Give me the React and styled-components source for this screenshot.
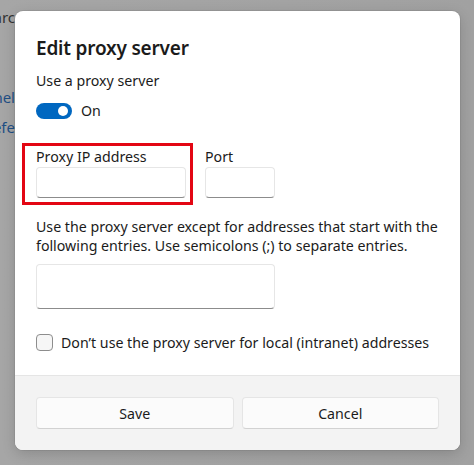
import React from "react";
import styled, { createGlobalStyle } from "styled-components";

const Global = createGlobalStyle`
  html, body { margin: 0; padding: 0; }
  body {
    width: 474px; height: 465px; overflow: hidden;
    font-family: "Noto Sans", "Open Sans", sans-serif;
    color: #1b1b1b;
    background: #a3a3a3;
  }
`;

const Page = styled.div`
  position: relative;
  width: 474px;
  height: 465px;
  overflow: hidden;
  background: linear-gradient(to right, #a6a6a6 0, #a1a1a1 100%);
`;

const BackText = styled.div`
  width: 15px;
  overflow: hidden;
  display: flex;
  justify-content: flex-end;
  font-size: 15px;
  line-height: 18px;
  white-space: nowrap;
  color: ${(p) => (p.link ? "#1f4f85" : "#333333")};
  margin-top: ${(p) => p.top}px;
`;

const Overlay = styled.div`
  position: absolute;
  inset: 0;
  padding: 11px 0 0 15px;
`;

const Dialog = styled.div`
  width: 445px;
  height: 439px;
  background: #ffffff;
  border-radius: 8px;
  overflow: hidden;
  display: flex;
  flex-direction: column;
  box-shadow: 0 0 0 1px rgba(0, 0, 0, 0.06), 0 4px 14px rgba(0, 0, 0, 0.16);
`;

const Body = styled.div`
  flex: 1;
  padding: 25px 21px 0 21px;
  display: flex;
  flex-direction: column;
`;

const Title = styled.h1`
  margin: 0;
  font-size: 19px;
  line-height: 24px;
  font-weight: 600;
  letter-spacing: -0.2px;
`;

const Text = styled.div`
  font-size: 14.2px;
  line-height: 19px;
  margin-top: ${(p) => p.top || 0}px;
`;

const ToggleRow = styled.div`
  display: flex;
  align-items: center;
  gap: 9px;
  margin-top: 11px;
`;

const Toggle = styled.div`
  width: 36px;
  height: 16px;
  border-radius: 8px;
  background: #0067c0;
  display: flex;
  align-items: center;
  justify-content: flex-end;
  padding: 0 4px;
  box-sizing: border-box;
  &::after {
    content: "";
    width: 10px;
    height: 10px;
    border-radius: 50%;
    background: #fff;
  }
`;

const FieldsRow = styled.div`
  display: flex;
  gap: 19px;
  margin-top: 27px;
`;

const Field = styled.div`
  position: relative;
  display: flex;
  flex-direction: column;
  gap: 1px;
  ${(p) =>
    p.highlight &&
    `
    &::after {
      content: "";
      position: absolute;
      left: -14px;
      top: -4px;
      right: -7px;
      bottom: -7px;
      border: 3px solid #e30613;
      pointer-events: none;
    }
  `}
`;

const Label = styled.label`
  font-size: 14.2px;
  line-height: 19px;
`;

const Input = styled.div`
  width: ${(p) => p.w}px;
  height: ${(p) => p.h || 31}px;
  margin-top: ${(p) => p.top || 0}px;
  box-sizing: border-box;
  background: #fff;
  border: 1px solid #e6e6e6;
  border-bottom: 1px solid #8c8c8c;
  border-radius: 4px;
`;

const CheckRow = styled.label`
  display: flex;
  align-items: center;
  gap: 8px;
  margin-top: 24px;
  font-size: 14.2px;
  line-height: 19px;
`;

const Box = styled.span`
  width: 17px;
  height: 17px;
  box-sizing: border-box;
  border: 1px solid #8d8d8d;
  border-radius: 4px;
  background: #f6f6f6;
  flex: none;
`;

const Footer = styled.div`
  height: 75px;
  box-sizing: border-box;
  background: #f3f3f3;
  border-top: 1px solid #e5e5e5;
  padding: 21px 21px 0 21px;
  display: grid;
  grid-template-columns: 1fr 1fr;
  column-gap: 8px;
  align-content: start;
`;

const Button = styled.button`
  height: 32px;
  background: #fbfbfb;
  border: 1px solid #e5e5e5;
  border-bottom-color: #d2d2d2;
  border-radius: 4px;
  font-family: inherit;
  font-size: 14.2px;
  color: #1b1b1b;
  padding: 0;
`;

export default function App() {
  return (
    <>
      <Global />
      <Page>
        <BackText top={8}>Searc</BackText>
        <BackText link top={62}>Channel</BackText>
        <BackText link top={12}>Prefe</BackText>
        <Overlay>
          <Dialog>
            <Body>
              <Title>Edit proxy server</Title>
              <Text top={11}>Use a proxy server</Text>
              <ToggleRow>
                <Toggle />
                <Text>On</Text>
              </ToggleRow>
              <FieldsRow>
                <Field highlight>
                  <Label>Proxy IP address</Label>
                  <Input w={150} />
                </Field>
                <Field>
                  <Label>Port</Label>
                  <Input w={70} />
                </Field>
              </FieldsRow>
              <Text top={19}>
                Use the proxy server except for addresses that start with the
                <br />
                following entries. Use semicolons (;) to separate entries.
              </Text>
              <Input w={239} h={45} top={9} />
              <CheckRow>
                <Box />
                Don’t use the proxy server for local (intranet) addresses
              </CheckRow>
            </Body>
            <Footer>
              <Button>Save</Button>
              <Button>Cancel</Button>
            </Footer>
          </Dialog>
        </Overlay>
      </Page>
    </>
  );
}
